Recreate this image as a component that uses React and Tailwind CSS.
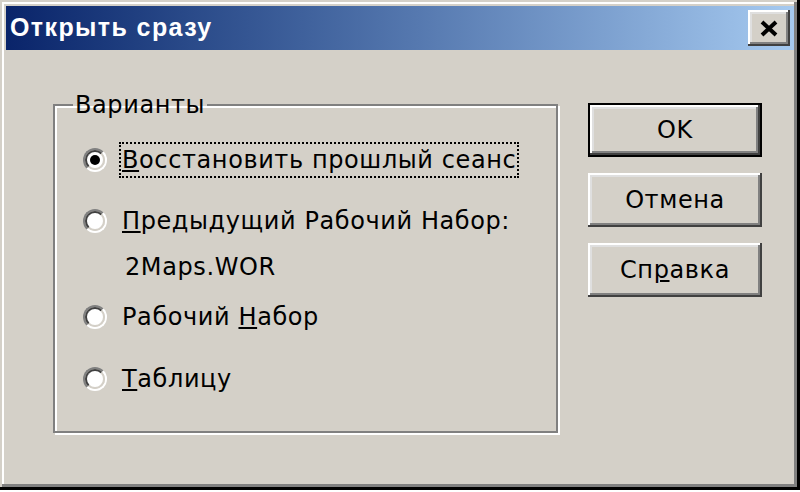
import React from "react";

const font = { fontFamily: '"DejaVu Sans", Verdana, sans-serif' };
const titleFont = { fontFamily: '"Liberation Sans", Arial, sans-serif' };

// radio button in the old win98 style
const Radio = ({ checked }) => (
  <div className="w-[24px] h-[24px] rounded-full border-2 border-t-[#808080] border-l-[#808080] border-b-white border-r-white shrink-0">
    <div className="w-full h-full rounded-full border-2 border-t-[#404040] border-l-[#404040] border-b-[#d4d0c8] border-r-[#d4d0c8] bg-white flex items-center justify-center">
      {checked && <div className="w-[10px] h-[10px] rounded-full bg-black" />}
    </div>
  </div>
);

const Option = ({ checked, focused, children }) => (
  <div className="flex items-center h-[36px]">
    <div className="ml-[28px] mr-[12px]">
      <Radio checked={checked} />
    </div>
    <div
      className={
        "h-[36px] flex items-center px-[1px] " +
        (focused ? "border-2 border-dotted border-black" : "border-2 border-transparent")
      }
    >
      {children}
    </div>
  </div>
);

const Button = ({ children, isDefault }) => (
  <button
    className={
      "w-[174px] h-[54px] bg-[#d4d0c8] text-[24px] tracking-[0.6px] text-black flex items-center justify-center " +
      (isDefault
        ? "border-2 border-black shadow-[inset_-2px_-2px_0_#404040,inset_2px_2px_0_#fff,inset_-4px_-4px_0_#808080,inset_4px_4px_0_#dfdfdf]"
        : "shadow-[inset_-2px_-2px_0_#404040,inset_2px_2px_0_#fff,inset_-4px_-4px_0_#808080,inset_4px_4px_0_#dfdfdf]")
    }
  >
    {children}
  </button>
);

export default function App() {
  return (
    <div className="w-[800px] h-[492px] bg-white" style={font}>
      <div className="w-[800px] h-[490px] bg-[#d4d0c8] flex flex-col p-[6px] shadow-[inset_-3px_-3px_0_#000,inset_2px_2px_0_#d4d0c8,inset_-6px_-6px_0_#808080,inset_4px_4px_0_#fff]">
        {/* Title bar */}
        <div className="h-[44px] flex items-center justify-between pl-[4px] pr-[4px] bg-gradient-to-r from-[#0a246a] to-[#a6caf0]">
          <span className="text-white font-bold text-[25px] tracking-[1.4px]" style={titleFont}>
            Открыть сразу
          </span>
          <button className="w-[42px] h-[36px] bg-[#d4d0c8] flex items-center justify-center shadow-[inset_-2px_-2px_0_#404040,inset_2px_2px_0_#fff,inset_-4px_-4px_0_#808080,inset_4px_4px_0_#dfdfdf]">
            <svg width="20" height="17" viewBox="0 0 20 17">
              <path d="M3 2 L17 15 M17 2 L3 15" stroke="#000" strokeWidth="4" />
            </svg>
          </button>
        </div>

        {/* Body */}
        <div className="flex pl-[47px] pt-[40px]">
          <fieldset className="w-[505px] h-[343px] border-2 border-[#808080] shadow-[inset_2px_2px_0_#fff,2px_2px_0_#fff] text-[24px] tracking-[0.6px] text-black">
            <legend className="ml-[18px] px-[2px] leading-[30px]">Варианты</legend>
            <div className="flex flex-col pt-[22px]">
              <Option checked focused>
                <span>
                  <u>В</u>осстановить прошлый сеанс
                </span>
              </Option>
              <div className="h-[25px]" />
              <Option>
                <span>
                  <u>П</u>редыдущий Рабочий Набор:
                </span>
              </Option>
              <div className="h-[10px]" />
              <div className="h-[36px] flex items-center pl-[70px]">2Maps.WOR</div>
              <div className="h-[14px]" />
              <Option>
                <span>
                  Рабочий <u>Н</u>абор
                </span>
              </Option>
              <div className="h-[26px]" />
              <Option>
                <span>
                  <u>Т</u>аблицу
                </span>
              </Option>
            </div>
          </fieldset>

          <div className="flex flex-col gap-[16px] ml-[30px] pt-[13px]">
            <Button isDefault>OK</Button>
            <Button>Отмена</Button>
            <Button>
              <span>
                Сп<u>р</u>авка
              </span>
            </Button>
          </div>
        </div>
      </div>
    </div>
  );
}
